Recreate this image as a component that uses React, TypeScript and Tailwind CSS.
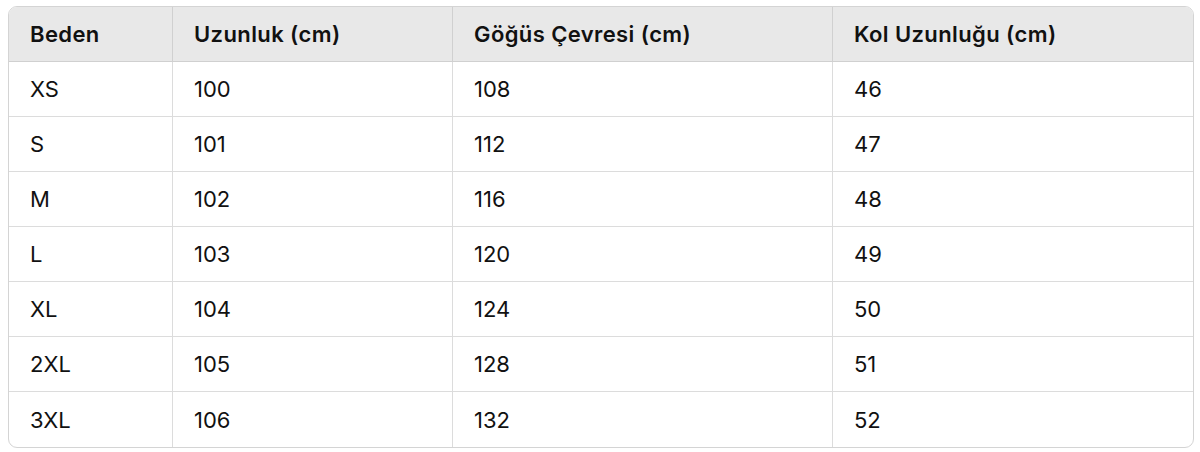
import React from "react";

const headers = ["Beden", "Uzunluk (cm)", "Göğüs Çevresi (cm)", "Kol Uzunluğu (cm)"];
const rows = [
  ["XS", "100", "108", "46"],
  ["S", "101", "112", "47"],
  ["M", "102", "116", "48"],
  ["L", "103", "120", "49"],
  ["XL", "104", "124", "50"],
  ["2XL", "105", "128", "51"],
  ["3XL", "106", "132", "52"],
];

export default function App() {
  return (
    <div className="w-[1200px] h-[452px] bg-white pl-[8px] pt-[6px]" style={{ fontFamily: "Inter, 'Noto Sans', sans-serif" }}>
      <div className="w-[1186px] border border-[#d4d4d4] rounded-[9px] overflow-hidden">
        <div className="grid grid-cols-[163px_280px_380px_1fr] bg-[#e8e8e8] h-[55px] border-b border-[#d0d0d0]">
          {headers.map((h, i) => (
            <div key={i} className={`flex items-center pl-[21px] pt-[1px] text-[22px] tracking-[0.4px] font-semibold text-[#111] ${i > 0 ? "border-l border-[#d0d0d0]" : ""}`}>
              {h}
            </div>
          ))}
        </div>
        {rows.map((r, ri) => (
          <div key={ri} className={`grid grid-cols-[163px_280px_380px_1fr] h-[55px] ${ri < rows.length - 1 ? "border-b border-[#dcdcdc]" : ""}`}>
            {r.map((c, ci) => (
              <div key={ci} className={`flex items-center pl-[21px] pt-[1px] text-[22px] text-[#111] ${ci > 0 ? "border-l border-[#dcdcdc]" : ""}`}>
                {c}
              </div>
            ))}
          </div>
        ))}
      </div>
    </div>
  );
}
